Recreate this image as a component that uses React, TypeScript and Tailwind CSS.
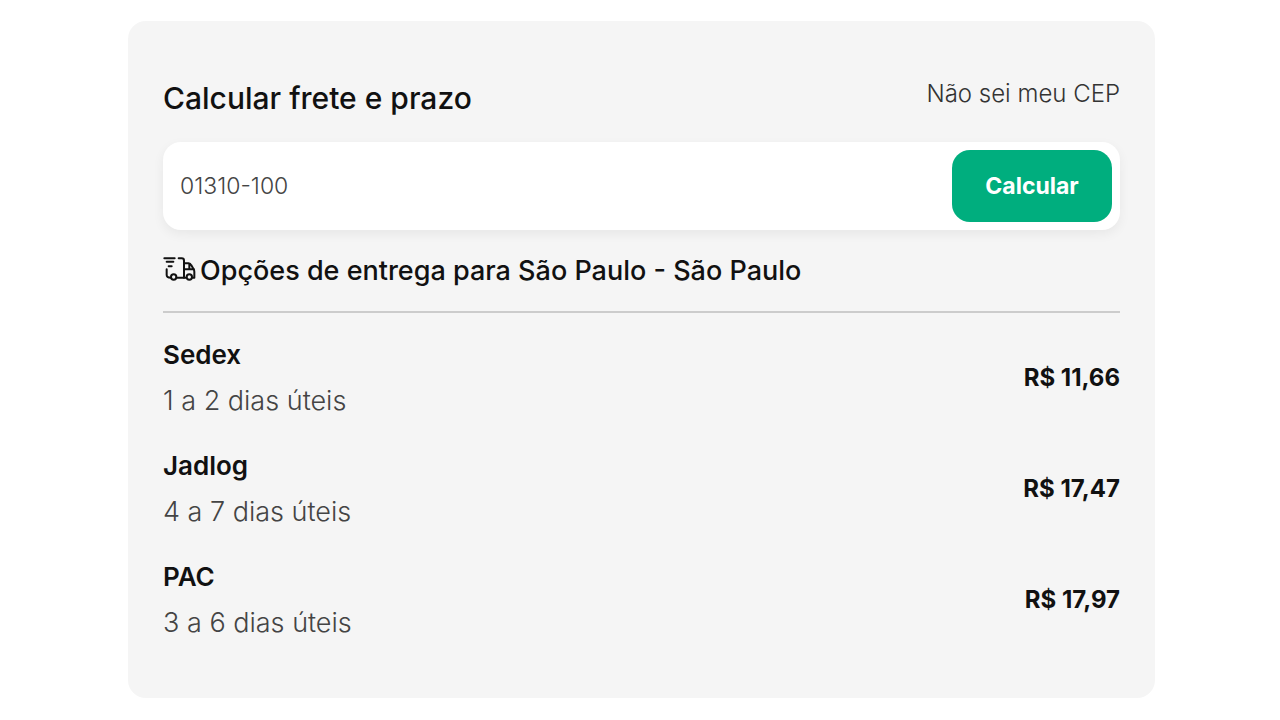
import { useState } from "react";

type ShippingOption = {
  name: string;
  deadline: string;
  price: string;
};

const options: ShippingOption[] = [
  { name: "Sedex", deadline: "1 a 2 dias úteis", price: "R$ 11,66" },
  { name: "Jadlog", deadline: "4 a 7 dias úteis", price: "R$ 17,47" },
  { name: "PAC", deadline: "3 a 6 dias úteis", price: "R$ 17,97" },
];

function TruckIcon() {
  return (
    <svg
      viewBox="0 0 99 72"
      className="mt-1.5 h-6 w-[33px] shrink-0"
      fill="none"
      stroke="currentColor"
      strokeWidth="6"
      strokeLinecap="round"
      strokeLinejoin="round"
      aria-hidden="true"
    >
      <path d="M4 4h31M11 14h20M17 28h9" />
      <path d="M47 4h9q7 0 7 7v51H42" />
      <path d="M11 37v17q0 8 12 8" />
      <path d="M63 19h14q5 0 8 6l6 10q3 4 3 9v18h-5M66 37h27M79 20v16M63 62h6" />
      <circle cx="32" cy="60" r="8" />
      <circle cx="79" cy="60" r="8" />
    </svg>
  );
}

export default function App() {
  const [cep, setCep] = useState("01310-100");

  return (
    <main className="bg-white pt-[21px] pr-[125px] pb-[22px] pl-32 font-['Inter',sans-serif] text-[#111111]">
      <section className="rounded-[18px] bg-[#f5f5f5] px-[35px] pt-[57px] pb-[52px]">
        <form onSubmit={(event) => event.preventDefault()}>
          <div className="flex items-start justify-between">
            <label htmlFor="cep" className="text-[30px] leading-10 font-medium">
              Calcular frete e prazo
            </label>
            <a href="#cep" className="text-[24px] leading-8 font-light text-[#333333]">
              Não sei meu CEP
            </a>
          </div>

          <div className="mt-6 flex items-stretch rounded-[18px] bg-white p-2 shadow-[0_4px_12px_rgba(0,0,0,0.06)]">
            <input
              id="cep"
              type="text"
              inputMode="numeric"
              value={cep}
              onChange={(event) => setCep(event.target.value)}
              className="min-w-0 flex-1 bg-transparent px-[9px] text-[23px] font-light text-[#444444] outline-none"
            />
            <button type="submit" className="h-[72px] w-40 rounded-[18px] bg-[#00ae7e] text-[23px] font-bold text-white">
              Calcular
            </button>
          </div>
        </form>

        <h2 className="mt-[21px] flex items-start gap-1 border-b-2 border-[#cccccc] pb-5 text-[27px] leading-10 font-medium">
          <TruckIcon />
          Opções de entrega para São Paulo - São Paulo
        </h2>

        <ul className="mt-[19px] flex flex-col gap-[19px]">
          {options.map((option) => (
            <li key={option.name} className="flex items-center justify-between">
              <div>
                <h3 className="text-[26px] leading-[46px] font-semibold">{option.name}</h3>
                <p className="text-[27px] leading-[46px] font-light text-[#444444]">{option.deadline}</p>
              </div>
              <p className="text-[24px] font-bold">{option.price}</p>
            </li>
          ))}
        </ul>
      </section>
    </main>
  );
}
